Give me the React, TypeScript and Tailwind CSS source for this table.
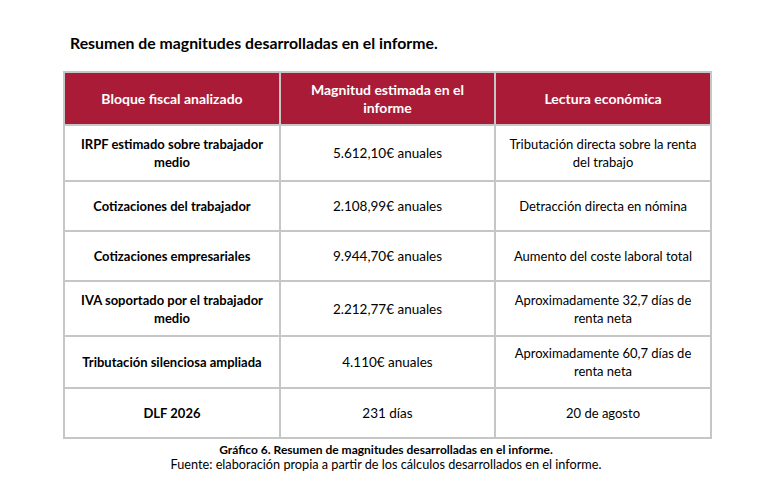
const rows = [
  { bloque: 'IRPF estimado sobre trabajador medio', magnitud: '5.612,10€ anuales', lectura: 'Tributación directa sobre la renta del trabajo', h: 'h-[56px]' },
  { bloque: 'Cotizaciones del trabajador', magnitud: '2.108,99€ anuales', lectura: 'Detracción directa en nómina', h: 'h-[50px]' },
  { bloque: 'Cotizaciones empresariales', magnitud: '9.944,70€ anuales', lectura: 'Aumento del coste laboral total', h: 'h-[50px]' },
  { bloque: 'IVA soportado por el trabajador medio', magnitud: '2.212,77€ anuales', lectura: 'Aproximadamente 32,7 días de renta neta', h: 'h-[55px]' },
  { bloque: 'Tributación silenciosa ampliada', magnitud: '4.110€ anuales', lectura: 'Aproximadamente 60,7 días de renta neta', h: 'h-[52px]' },
  { bloque: 'DLF 2026', magnitud: '231 días', lectura: '20 de agosto', h: 'h-[50px]' },
];

export default function App() {
  return (
    <div className="w-[760px] h-[477px] bg-white text-black font-['Lato','Open_Sans',sans-serif]">
      <h2 className="pl-[70px] pt-[33px] text-[15.8px] font-bold leading-[20px]">
        Resumen de magnitudes desarrolladas en el informe.
      </h2>

      <table className="ml-[63px] mt-[18px] w-[647px] table-fixed border-collapse border-2 border-[#c6c6c6] text-[13px] leading-[18px]">
        <thead>
          <tr className="h-[53px] bg-[#a91b36] text-white">
            <th className="w-[216px] border-2 border-[#c6c6c6] px-6 font-bold text-[14px]">Bloque fiscal analizado</th>
            <th className="w-[215px] border-2 border-[#c6c6c6] px-6 font-bold text-[14px]">Magnitud estimada en el informe</th>
            <th className="w-[216px] border-2 border-[#c6c6c6] px-6 font-bold text-[14px]">Lectura económica</th>
          </tr>
        </thead>
        <tbody>
          {rows.map((r) => (
            <tr key={r.bloque} className={r.h}>
              <td className="border-2 border-[#c6c6c6] px-2 text-center font-bold">{r.bloque}</td>
              <td className="border-2 border-[#c6c6c6] px-2 text-center text-[13.5px]">{r.magnitud}</td>
              <td className="border-2 border-[#c6c6c6] px-2 text-center">{r.lectura}</td>
            </tr>
          ))}
        </tbody>
      </table>

      <div className="mt-[3px] w-[772px] text-center">
        <p className="text-[12px] font-bold leading-[15px]">Gráfico 6. Resumen de magnitudes desarrolladas en el informe.</p>
        <p className="text-[12.7px] leading-[15px]">Fuente: elaboración propia a partir de los cálculos desarrollados en el informe.</p>
      </div>
    </div>
  );
}
